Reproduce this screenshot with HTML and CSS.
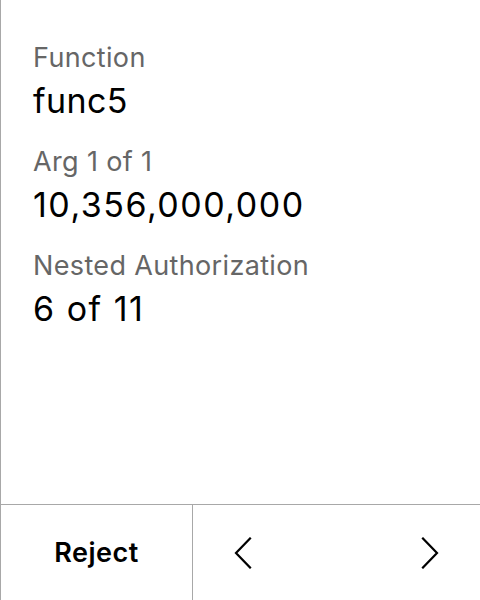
FILE: index.html
```html
<!DOCTYPE html>
<html>
<head>
<meta charset="utf-8">
<link rel="stylesheet" href="styles.css">
</head>
<body>
<div class="screen">
  <div class="content">
    <div class="field">
      <div class="label">Function</div>
      <div class="value">func5</div>
    </div>
    <div class="field">
      <div class="label">Arg 1 of 1</div>
      <div class="value num">10,356,000,000</div>
    </div>
    <div class="field">
      <div class="label">Nested Authorization</div>
      <div class="value num">6 of 11</div>
    </div>
  </div>
  <div class="footer">
    <div class="reject">Reject</div>
    <div class="nav">
      <svg class="chev" width="18" height="32" viewBox="0 0 18 32"><polyline points="16,1.5 2,16 16,30.5" fill="none" stroke="#000" stroke-width="2.2" stroke-linecap="square" stroke-linejoin="miter"/></svg>
      <svg class="chev" width="18" height="32" viewBox="0 0 18 32"><polyline points="2,1.5 16,16 2,30.5" fill="none" stroke="#000" stroke-width="2.2" stroke-linecap="square" stroke-linejoin="miter"/></svg>
    </div>
  </div>
</div>
</body>
</html>
```
FILE: styles.css
```css
html, body {
  margin: 0;
  padding: 0;
  background: #fff;
}
body {
  font-family: Inter, "Noto Sans", sans-serif;
  color: #000;
}
.screen {
  width: 480px;
  height: 600px;
  box-sizing: border-box;
  border-left: 1px solid #a8a8a8;
  display: flex;
  flex-direction: column;
}
.content {
  flex: 1;
  padding: 42px 0 0 32px;
  display: flex;
  flex-direction: column;
  gap: 25px;
}
.field {
  display: flex;
  flex-direction: column;
  gap: 7px;
}
.label {
  font-size: 27px;
  line-height: 32px;
  letter-spacing: 0.35px;
  color: #666;
}
.value {
  font-size: 34px;
  line-height: 40px;
  letter-spacing: 0.4px;
  color: #000;
}
.value.num {
  letter-spacing: 1.5px;
}
.footer {
  height: 96px;
  box-sizing: border-box;
  border-top: 1px solid #a8a8a8;
  display: grid;
  grid-template-columns: 192px 1fr;
}
.reject {
  display: flex;
  align-items: center;
  justify-content: center;
  font-size: 27px;
  font-weight: 600;
  letter-spacing: 0.5px;
  border-right: 1px solid #a8a8a8;
}
.nav {
  display: flex;
  align-items: center;
  justify-content: space-between;
  padding: 0 41px 0 41px;
}
```
